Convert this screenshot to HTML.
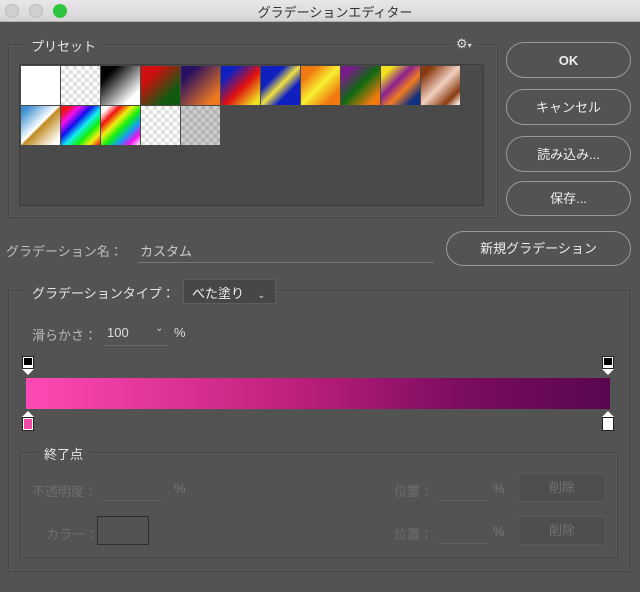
<!DOCTYPE html>
<html><head><meta charset="utf-8"><style>
*{box-sizing:border-box;margin:0;padding:0}
body{width:640px;height:592px;background:#535353;font-family:"Liberation Sans","Noto Sans CJK JP",sans-serif;position:relative;overflow:hidden;color:#ddd}
.a{position:absolute}
.tb{left:0;top:0;width:640px;height:22px;background:linear-gradient(#e8e6e8,#d6d4d6);border-bottom:1px solid #b0b0b0}
.dot{top:4px;width:14px;height:14px;border-radius:50%}
.btn{border:1.5px solid #9a9a9a;border-radius:18px;text-align:center;color:#eee;font-size:13px;background:#535353}
.sw{width:39px;height:39px}
.chk{background-color:#fff;background-image:linear-gradient(45deg,#e0e0e0 25%,transparent 25%,transparent 75%,#e0e0e0 75%),linear-gradient(45deg,#e0e0e0 25%,transparent 25%,transparent 75%,#e0e0e0 75%);background-size:8px 8px;background-position:0 0,4px 4px}
.fs{border:1px solid #444;box-shadow:inset 0 0 0 1px #5c5c5c}
.lbl{font-size:13px;color:#e6e6e6}
.dim{font-size:13px;color:#6e6e6e}
</style></head><body>
<div class="a tb"></div>
<div class="a dot" style="left:5px;background:#d0ced0;border:1px solid #bbb"></div>
<div class="a dot" style="left:29px;background:#d0ced0;border:1px solid #bbb"></div>
<div class="a dot" style="left:53px;background:#2fc43f"></div>
<div class="a" style="left:0;width:640px;top:2px;text-align:center;font-size:13px;color:#333;padding-left:30px">グラデーションエディター</div>

<div class="a fs" style="left:8px;top:44px;width:490px;height:174px"></div>
<div class="a lbl" style="left:25px;top:36px;background:#535353;padding:0 6px">プリセット</div>
<div class="a" style="left:452px;top:36px;background:#535353;padding:0 4px;font-size:13px;color:#ddd">⚙<span style="font-size:8px">▾</span></div>
<div class="a" style="left:19px;top:64px;width:465px;height:142px;background:#4a4a4a;border:1px solid #3e3e3e"></div>
<div class="a sw" style="left:21px;top:66px;background:#fff"></div>
<div class="a sw chk" style="left:61px;top:66px"></div>
<div class="a sw" style="left:101px;top:66px;background:linear-gradient(135deg,#000 20%,#fff 80%)"></div>
<div class="a sw" style="left:141px;top:66px;background:linear-gradient(135deg,#d01010 25%,#105a10 75%)"></div>
<div class="a sw" style="left:181px;top:66px;background:linear-gradient(135deg,#2a1060 20%,#f07a20 85%)"></div>
<div class="a sw" style="left:221px;top:66px;background:linear-gradient(135deg,#1020c0 20%,#e01010 55%,#f0e020 90%)"></div>
<div class="a sw" style="left:261px;top:66px;background:linear-gradient(135deg,#1020c0 30%,#f0e040 50%,#1020c0 70%)"></div>
<div class="a sw" style="left:301px;top:66px;background:linear-gradient(135deg,#f07a10 20%,#f8f030 50%,#f07a10 80%)"></div>
<div class="a sw" style="left:341px;top:66px;background:linear-gradient(135deg,#7a1a8a 15%,#106a10 50%,#f07a10 85%)"></div>
<div class="a sw" style="left:381px;top:66px;background:linear-gradient(135deg,#f0e020 15%,#8a2090 40%,#f07a20 60%,#103080 85%)"></div>
<div class="a sw" style="left:421px;top:66px;background:linear-gradient(135deg,#8a3a10 15%,#f0d0c0 50%,#8a3a10 80%,#f0e0d0 95%)"></div>
<div class="a sw" style="left:21px;top:106px;background:linear-gradient(135deg,#3a90d0 10%,#fff 48%,#c08a20 52%,#fff 90%)"></div>
<div class="a sw" style="left:61px;top:106px;background:linear-gradient(135deg,#f01010 10%,#f010f0 25%,#1010f0 40%,#10f0f0 55%,#10f010 70%,#f0f010 85%,#f01010)"></div>
<div class="a sw" style="left:101px;top:106px;background:linear-gradient(135deg,#fff 10%,#f01010 25%,#f0f010 40%,#10f010 55%,#10a0f0 70%,#f010f0 85%,#fff)"></div>
<div class="a sw chk" style="left:141px;top:106px"></div>
<div class="a sw chk" style="left:181px;top:106px;filter:brightness(.8)"></div>

<div class="a btn" style="left:506px;top:42px;width:125px;height:36px;line-height:35px;font-weight:bold">OK</div>
<div class="a btn" style="left:506px;top:89px;width:125px;height:36px;line-height:35px">キャンセル</div>
<div class="a btn" style="left:506px;top:136px;width:125px;height:36px;line-height:35px">読み込み...</div>
<div class="a btn" style="left:506px;top:181px;width:125px;height:35px;line-height:34px">保存...</div>

<div class="a" style="left:6px;top:241px;font-size:13px;color:#bdbdbd">グラデーション名：</div>
<div class="a lbl" style="left:140px;top:241px;color:#ccc">カスタム</div>
<div class="a" style="left:138px;top:262px;width:296px;height:1px;background:#777"></div>
<div class="a btn" style="left:446px;top:231px;width:185px;height:35px;line-height:34px">新規グラデーション</div>

<div class="a fs" style="left:8px;top:290px;width:622px;height:282px"></div>
<div class="a lbl" style="left:26px;top:283px;background:#535353;padding:0 6px">グラデーションタイプ：</div>
<div class="a" style="left:183px;top:279px;width:93px;height:25px;background:#474747;border:1px solid #5e5e5e;font-size:13px;color:#eee;padding:3px 0 0 8px">べた塗り <span style="font-size:9px;margin-left:10px">⌄</span></div>
<div class="a" style="left:32px;top:325px;font-size:13px;color:#bbb">滑らかさ：</div>
<div class="a" style="left:107px;top:325px;font-size:13px;color:#ddd">100</div>
<div class="a" style="left:155px;top:323px;font-size:10px;color:#ccc">⌄</div>
<div class="a" style="left:174px;top:325px;font-size:13px;color:#ddd">%</div>
<div class="a" style="left:102px;top:345px;width:66px;height:1px;background:#666"></div>

<div class="a" style="left:22px;top:356px;width:12px;height:13px;background:#fff;border:1px solid #222"><div style="margin:1px;width:8px;height:7px;background:#000"></div></div>
<div class="a" style="left:22px;top:369px;border-left:6px solid transparent;border-right:6px solid transparent;border-top:6px solid #fff"></div>
<div class="a" style="left:602px;top:356px;width:12px;height:13px;background:#fff;border:1px solid #222"><div style="margin:1px;width:8px;height:7px;background:#000"></div></div>
<div class="a" style="left:602px;top:369px;border-left:6px solid transparent;border-right:6px solid transparent;border-top:6px solid #fff"></div>
<div class="a" style="left:26px;top:378px;width:584px;height:31px;background:linear-gradient(90deg,#ff4ab4,#c0207e 45%,#7a0c60 75%,#5a0650)"></div>
<div class="a" style="left:22px;top:411px;border-left:6px solid transparent;border-right:6px solid transparent;border-bottom:6px solid #fff"></div>
<div class="a" style="left:22px;top:417px;width:12px;height:14px;background:#fff;border:1px solid #222"><div style="margin:1px;width:8px;height:10px;background:#f04aa8"></div></div>
<div class="a" style="left:602px;top:411px;border-left:6px solid transparent;border-right:6px solid transparent;border-bottom:6px solid #fff"></div>
<div class="a" style="left:602px;top:417px;width:12px;height:14px;background:#fff;border:1px solid #222"></div>

<div class="a fs" style="left:20px;top:452px;width:598px;height:106px"></div>
<div class="a lbl" style="left:38px;top:444px;background:#535353;padding:0 6px">終了点</div>
<div class="a dim" style="left:32px;top:481px">不透明度：</div>
<div class="a" style="left:103px;top:500px;width:60px;height:1px;background:#606060"></div>
<div class="a dim" style="left:174px;top:481px;color:#777">%</div>
<div class="a dim" style="left:46px;top:524px">カラー：</div>
<div class="a" style="left:97px;top:516px;width:52px;height:29px;border:1px solid #2e2e2e"></div>
<div class="a dim" style="left:394px;top:481px">位置：</div>
<div class="a" style="left:438px;top:500px;width:50px;height:1px;background:#606060"></div>
<div class="a dim" style="left:493px;top:481px;color:#777">%</div>
<div class="a" style="left:518px;top:473px;width:88px;height:29px;background:#4e4e4e;border:1px solid #5a5a5a;text-align:center;line-height:27px;font-size:13px;color:#707070">削除</div>
<div class="a dim" style="left:394px;top:524px">位置：</div>
<div class="a" style="left:438px;top:543px;width:50px;height:1px;background:#606060"></div>
<div class="a dim" style="left:493px;top:524px;color:#777">%</div>
<div class="a" style="left:518px;top:516px;width:88px;height:29px;background:#4e4e4e;border:1px solid #5a5a5a;text-align:center;line-height:27px;font-size:13px;color:#707070">削除</div>
</body></html>
